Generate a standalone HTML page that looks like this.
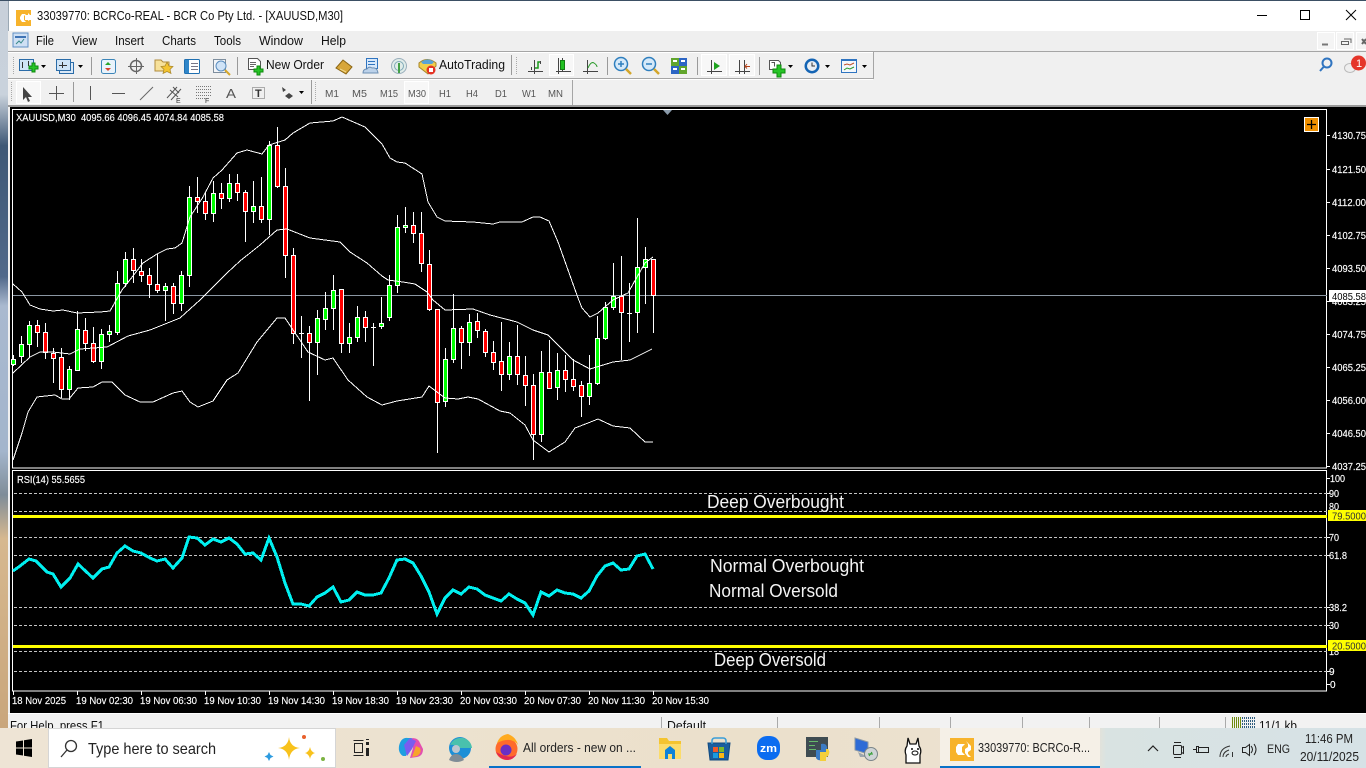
<!DOCTYPE html>
<html><head><meta charset="utf-8"><title>33039770: BCRCo-REAL</title>
<style>html,body{margin:0;padding:0;background:#000;overflow:hidden}svg{display:block}text{font-family:"Liberation Sans",sans-serif;white-space:pre}
.m{font-size:13px;fill:#111}.ax{font-size:10px;fill:#fff;stroke:#fff;stroke-width:.15px}.t{font-size:10.5px;fill:#fff;stroke:#fff;stroke-width:.15px}.tf{font-size:10.5px;fill:#555}.an{font-size:18px;fill:#f4f4f4}.tb{font-size:12px;fill:#222}</style></head>
<body>
<svg xmlns="http://www.w3.org/2000/svg" width="1366" height="768" viewBox="0 0 1366 768">
<defs>
<linearGradient id="wp" x1="0" y1="0" x2="0" y2="1"><stop offset="0" stop-color="#c8d0da"/><stop offset=".13" stop-color="#c9d2dc"/><stop offset=".2" stop-color="#3e5876"/><stop offset=".38" stop-color="#51698a"/><stop offset=".42" stop-color="#a9b9cf"/><stop offset=".62" stop-color="#a3b5cc"/><stop offset=".68" stop-color="#7f8d98"/><stop offset=".74" stop-color="#d6b88f"/><stop offset="1" stop-color="#c9a67c"/></linearGradient>
<linearGradient id="tk" x1="0" y1="0" x2="1" y2="0"><stop offset="0" stop-color="#eee4d5"/><stop offset=".55" stop-color="#ebe0cb"/><stop offset=".8" stop-color="#ece2d3"/><stop offset=".81" stop-color="#d9e3e2"/><stop offset="1" stop-color="#d6e2e6"/></linearGradient>
</defs>
<rect width="1366" height="768" fill="#f0f0f0"/>
<rect x="0" y="0" width="8" height="728" fill="url(#wp)"/>
<rect x="0" y="0" width="1366" height="1" fill="#3b4f64"/>
<rect x="8" y="1" width="1358" height="30" fill="#fff"/>
<rect x="8" y="1" width="1" height="30" fill="#9aa8b4"/>
<!-- title logo -->
<path d="M16 10h15v5h-6v5h6v6H16z" fill="#f7b32b"/><path d="M22 14h4l-2 2v4l2 2h-4l-2-3v-2z" fill="#fff"/><path d="M28 13l3 3v3l-3 2z" fill="#fff"/>
<text x="37" y="20" class="m" style="font-size:12.5px" textLength="306" lengthAdjust="spacingAndGlyphs">33039770: BCRCo-REAL - BCR Co Pty Ltd. - [XAUUSD,M30]</text>
<path d="M1257 15.500h10" stroke="#000"/><rect x="1300.500" y="10.500" width="9" height="9" fill="none" stroke="#000"/><path d="M1346 10l10 10M1356 10l-10 10" stroke="#000"/>
<!-- menu -->
<rect x="8" y="31" width="1358" height="20" fill="#efefef"/>
<rect x="13" y="33" width="15" height="14" fill="#cfe0f4" stroke="#5f8fc4"/><path d="M15 37h11" stroke="#3f74b5" stroke-width="2"/><path d="M16 44l3-3 2 2 3-4" stroke="#3a8a8a" fill="none"/>
<text x="36" y="45" class="m" textLength="18" lengthAdjust="spacingAndGlyphs">File</text><text x="72" y="45" class="m" textLength="25" lengthAdjust="spacingAndGlyphs">View</text><text x="115" y="45" class="m" textLength="29" lengthAdjust="spacingAndGlyphs">Insert</text><text x="162" y="45" class="m" textLength="34" lengthAdjust="spacingAndGlyphs">Charts</text><text x="214" y="45" class="m" textLength="27" lengthAdjust="spacingAndGlyphs">Tools</text><text x="259" y="45" class="m" textLength="44" lengthAdjust="spacingAndGlyphs">Window</text><text x="321" y="45" class="m" textLength="25" lengthAdjust="spacingAndGlyphs">Help</text>
<g fill="#f4f4f4" stroke="#fff"><rect x="1317.500" y="32.500" width="17" height="17"/><rect x="1336.500" y="32.500" width="17" height="17"/><rect x="1356.500" y="32.500" width="12" height="17"/></g>
<path d="M1322 44.500h6" stroke="#777" stroke-width="2"/><path d="M1341.500 41.500h7v3h-7zM1344 39h7v4" fill="none" stroke="#666"/><path d="M1362 39l4 5M1366 39l-4 5" stroke="#666" stroke-width="2"/>
<!-- toolbar lines -->
<rect x="8" y="51" width="1358" height="1" fill="#a5a5a5"/><rect x="8" y="52" width="865" height="1" fill="#fff"/>
<rect x="8" y="78" width="865" height="1" fill="#a5a5a5"/><rect x="8" y="79" width="865" height="1" fill="#fff"/><rect x="873" y="52" width="1" height="27" fill="#a5a5a5"/>
<rect x="572" y="80" width="1" height="26" fill="#a5a5a5"/><rect x="8" y="105" width="1358" height="2" fill="#9a9a9a"/>
<g stroke="#9a9a9a"><path d="M91.500 57v18M237.500 57v18M511.500 55v20M607.500 57v18M697.500 57v18M759.500 57v18M73.500 82v20M311.500 80v24"/></g>
<g stroke="#aaa" stroke-dasharray="1 1"><path d="M13.500 57v18M11.500 82v20M516.500 57v18M315.500 82v20"/></g>
<!-- row 1 icons -->
<g>
<rect x="19.500" y="59.500" width="14" height="11" fill="#cfe4f7" stroke="#2b6ca8"/><path d="M22.500 62v6M28.500 61v5" stroke="#333"/><path d="M29 66h3v-3h3v3h3v3h-3v3h-3v-3h-3z" fill="#27c427" stroke="#0c8a0c"/>
<path d="M41 65h5l-2.500 3z" fill="#000"/>
<rect x="59.500" y="62.500" width="14" height="11" fill="#dbe9f7" stroke="#2b6ca8"/><rect x="56.500" y="59.500" width="14" height="11" fill="#cfe4f7" stroke="#2b6ca8"/><path d="M59 65.500h8M62.500 62v6" stroke="#333"/>
<path d="M78 65h5l-2.500 3z" fill="#000"/>
<rect x="101.500" y="59.500" width="14" height="14" rx="2" fill="#e9f3fb" stroke="#3d86b9"/><path d="M108 62l3 3h-6z" fill="#2aa52a"/><path d="M108 71l3-3h-6z" fill="#d8432a"/>
<circle cx="136" cy="66" r="5.500" fill="none" stroke="#666" stroke-width="1.500"/><path d="M136.500 58v16M128 66.500h16" stroke="#666"/>
<path d="M155 60h6l2 2h6v9h-14z" fill="#f7e19a" stroke="#b08c3c"/><path d="M167 62l2 4 4 .5-3 3 1 4-4-2-4 2 1-4-3-3 4-.5z" fill="#f4c430" stroke="#a7852a" stroke-width=".7"/>
<rect x="184.500" y="59.500" width="15" height="14" rx="1" fill="#fff" stroke="#1f6fb0"/><rect x="185" y="60" width="4" height="13" fill="#2f86c9"/><path d="M191 63.500h7M191 66.500h7M191 69.500h7" stroke="#778"/>
<rect x="213.500" y="59.500" width="12" height="13" fill="#f3f5f8" stroke="#7e8e9e"/><circle cx="221" cy="66" r="5" fill="#cfe3f7" stroke="#5a8dbf"/><path d="M225 70l5 5" stroke="#d6a72c" stroke-width="2"/>
<path d="M248.500 58.500h9l3 3v8h-12z" fill="#fff" stroke="#555"/><path d="M250 62.500h6M250 64.500h6M250 66.500h4" stroke="#666"/><path d="M254 69h3v-3h3v3h3v3h-3v3h-3v-3h-3z" fill="#27c427" stroke="#0c8a0c"/>
<text x="266" y="69" class="m" textLength="58" lengthAdjust="spacingAndGlyphs">New Order</text>
<path d="M336 68l7-8 9 7-6 7z" fill="#d7a63b" stroke="#8a6514"/><path d="M340 69l6 3" stroke="#f0d88a"/>
<rect x="366.500" y="58.500" width="11" height="10" fill="#d7e8fa" stroke="#2f74c0"/><path d="M368 61.500h7M368 64.500h7" stroke="#2f74c0"/><path d="M363 73q0-4 4-4q2-3 5-1q5-1 6 5z" fill="#bcd2ea" stroke="#6d8fb3"/>
<circle cx="399" cy="66" r="7.500" fill="#e0ece9" stroke="#99aebb"/><circle cx="399" cy="66" r="4.500" fill="none" stroke="#7fa9b8"/><path d="M399 63v10" stroke="#43a047" stroke-width="2"/>
<path d="M419 63q8-7 17 0v3l-8 8-9-7z" fill="#f2cf4a" stroke="#a6852a"/><path d="M421 62q7-5 13 0l-2 2h-9z" fill="#5aa3d6"/><circle cx="431" cy="70" r="4.500" fill="#e43325"/><rect x="429" y="68" width="4" height="4" fill="#fff"/>
<text x="439" y="69" class="m" textLength="66" lengthAdjust="spacingAndGlyphs">AutoTrading</text>
<g fill="none" stroke="#444"><path d="M528 71.500h15M534.500 60v14M531.500 70v-3M540.500 64v-3" /></g><path d="M535 68h3v-6h2" fill="none" stroke="#1a9a1a" stroke-width="1.500"/>
<rect x="549.500" y="54.500" width="24" height="21" fill="#f7f7f7" stroke="#fff"/><path d="M556 71.500h15M558.500 58v16M562.500 58v13" stroke="#444" fill="none"/><rect x="560.500" y="60.500" width="4" height="9" fill="#21c121" stroke="#137d13"/>
<path d="M583 71.500h15M587.500 60v14" stroke="#444" fill="none"/><path d="M588 68q3-7 6-5t3 4" stroke="#2a9a2a" fill="none"/>
<circle cx="621" cy="64" r="6.500" fill="#d5e9f9" stroke="#2f7fbe" stroke-width="1.500"/><path d="M618 64h6M621 61v6" stroke="#2f7fbe" stroke-width="1.500"/><path d="M626 69l5 5" stroke="#d3a52a" stroke-width="2.500"/>
<circle cx="649" cy="64" r="6.500" fill="#d5e9f9" stroke="#2f7fbe" stroke-width="1.500"/><path d="M646 64h6" stroke="#2f7fbe" stroke-width="1.500"/><path d="M654 69l5 5" stroke="#d3a52a" stroke-width="2.500"/>
<rect x="671" y="58" width="8" height="8" fill="#61a52c"/><rect x="679" y="58" width="8" height="8" fill="#2c65c4"/><rect x="671" y="66" width="8" height="8" fill="#2c65c4"/><rect x="679" y="66" width="8" height="8" fill="#61a52c"/><path d="M673 61h4M681 61h4M673 69h4M681 69h4" stroke="#fff" stroke-width="2"/>
<rect x="701.500" y="54.500" width="25" height="21" fill="#f7f7f7" stroke="#fff"/><path d="M707 71.500h15M711.500 60v14" stroke="#444" fill="none"/><path d="M714 62l6 4-6 4z" fill="#1fa31f"/>
<rect x="729.500" y="54.500" width="25" height="21" fill="#f7f7f7" stroke="#fff"/><path d="M735 71.500h15M739.500 60v14M744.500 60v14" stroke="#444" fill="none"/><path d="M745 66.500h5M747 64l-2 2.500 2 2" stroke="#b5421a" fill="none"/>
<path d="M769.500 60.500h9l2 2v7h-11z" fill="#fff" stroke="#555"/><path d="M771.500 62.500h3v4" stroke="#555" fill="none"/><path d="M773 69h4v-4h4v4h4v4h-4v4h-4v-4h-4z" fill="#27c427" stroke="#0c8a0c"/><path d="M788 65h5l-2.500 3z" fill="#000"/>
<circle cx="812" cy="66" r="7.500" fill="#1464b4"/><circle cx="812" cy="66" r="5" fill="#e9eef3"/><path d="M812 62.500V66h3" stroke="#333" fill="none"/><path d="M825 65h5l-2.500 3z" fill="#000"/>
<rect x="841.500" y="59.500" width="15" height="13" fill="#f4f8fc" stroke="#2f74c0"/><path d="M842 60h15" stroke="#2f74c0" stroke-width="2"/><path d="M844 65l3-1 3 1 4-2" stroke="#c0502a" fill="none"/><path d="M844 70l3-2 3 1 4-2" stroke="#2a9a2a" fill="none"/><path d="M862 65h5l-2.500 3z" fill="#000"/>
<circle cx="1327" cy="63" r="4.500" fill="none" stroke="#2f74c0" stroke-width="2"/><path d="M1323.500 67l-3.500 4" stroke="#2f74c0" stroke-width="2"/>
<ellipse cx="1350" cy="68" rx="5.500" ry="4.500" fill="#eee" stroke="#bbb"/><circle cx="1358.500" cy="63" r="7.500" fill="#e5352a"/><text x="1356" y="67" style="font-size:11px;fill:#fff">1</text>
</g>
<!-- row 2 -->
<rect x="16.500" y="81.500" width="24" height="22" fill="#f7f7f7" stroke="#fff"/><path d="M23 87v13l3-3 2 5 2-1-2-4h4z" fill="#444"/>
<path d="M56.500 86v14M49 93.500h15" stroke="#555"/><path d="M90.500 86v14" stroke="#555"/><path d="M112 93.500h13" stroke="#555"/><path d="M140 100l13-13" stroke="#666"/>
<path d="M167 98l10-11M171 100l10-11M170 90l8 7M173 87l6 6" stroke="#555" fill="none"/><text x="176" y="103" style="font-size:7px;fill:#333">E</text>
<path d="M196 86.500h15M196 89.500h15M196 92.500h15M196 95.500h15M196 98.500h9" stroke="#777" stroke-dasharray="1 1"/><text x="205" y="103" style="font-size:7px;fill:#333">F</text>
<text x="226" y="98" style="font-size:13px;fill:#555" textLength="10" lengthAdjust="spacingAndGlyphs">A</text>
<rect x="252.500" y="87.500" width="12" height="11" fill="none" stroke="#666" stroke-dasharray="1 1"/><text x="255" y="97" style="font-size:11px;fill:#333;font-weight:bold">T</text>
<path d="M282 87l4 3-3 2zM289 93l4 3-4 3-4-3z" fill="#444"/><path d="M299 91h5l-2.500 3z" fill="#000"/>
<rect x="404.500" y="81.500" width="24" height="22" fill="#f7f7f7" stroke="#fff"/>
<g><text x="325" y="97" class="tf" textLength="14" lengthAdjust="spacingAndGlyphs">M1</text><text x="352" y="97" class="tf" textLength="15" lengthAdjust="spacingAndGlyphs">M5</text><text x="380" y="97" class="tf" textLength="18" lengthAdjust="spacingAndGlyphs">M15</text><text x="408" y="97" class="tf" textLength="18" lengthAdjust="spacingAndGlyphs">M30</text><text x="439" y="97" class="tf" textLength="12" lengthAdjust="spacingAndGlyphs">H1</text><text x="466" y="97" class="tf" textLength="12" lengthAdjust="spacingAndGlyphs">H4</text><text x="495" y="97" class="tf" textLength="12" lengthAdjust="spacingAndGlyphs">D1</text><text x="522" y="97" class="tf" textLength="14" lengthAdjust="spacingAndGlyphs">W1</text><text x="548" y="97" class="tf" textLength="15" lengthAdjust="spacingAndGlyphs">MN</text></g>
<!-- chart area -->
<rect x="10" y="107" width="1356" height="606" fill="#000"/>
<g fill="none" stroke="#fff"><rect x="12.500" y="109.500" width="1314" height="358.500"/><rect x="12.500" y="470.500" width="1314" height="220.500"/></g>
<path d="M663 110h9l-4.500 5z" fill="#8a9aaa"/>
<rect x="1304.500" y="117.500" width="14" height="14" fill="#f09000" stroke="#fff"/><path d="M1311.500 120v9M1307 124.500h9" stroke="#000" stroke-width="1.300"/>
<text x="16" y="121" class="ax" textLength="208" lengthAdjust="spacingAndGlyphs">XAUUSD,M30  4095.66 4096.45 4074.84 4085.58</text>
<path d="M13 295.500H1327" stroke="#8b97a3"/>
<!-- wicks -->
<path shape-rendering="crispEdges" stroke="#fff" fill="none" d="M13.500 355V366M21.500 336V363M29.500 321V357M37.500 320V347M45.500 323V359M53.500 348V383M61.500 348V398M69.500 366V400M77.500 311V371M85.500 318V351M93.500 327V363M101.500 329V369M109.500 325V342M117.500 271V335M125.500 252V287M133.500 248V283M141.500 259V282M149.500 268V298M157.500 254V293M165.500 283V321M173.500 283V314M181.500 271V311M189.500 186V287M197.500 177V213M205.500 192V220M213.500 181V222M221.500 183V209M229.500 174V202M237.500 174V201M245.500 190V242M253.500 181V223M261.500 177V223M269.500 141V235M277.500 127V188M285.500 168V278M293.500 248V344M301.500 316V358M309.500 326V401M317.500 310V375M325.500 292V330M333.500 275V330M341.500 289V353M349.500 323V353M357.500 306V342M365.500 311V342M373.500 323V366M381.500 297V329M389.500 275V321M397.500 215V293M405.500 207V233M413.500 212V243M421.500 212V272M429.500 250V311M437.500 309V453M445.500 348V407M453.500 294V363M461.500 326V369M469.500 314V356M477.500 313V338M485.500 329V357M493.500 341V370M501.500 322V391M509.500 342V380M517.500 325V385M525.500 356V406M533.500 374V460M541.500 351V442M549.500 340V388M557.500 353V400M565.500 355V392M573.500 359V391M581.500 381V417M589.500 355V405M597.500 316V385M605.500 302V340M613.500 263V310M621.500 256V360M629.500 283V342M637.500 218V333M645.500 247V304M653.500 259V333M299 333.500h5M371 327.500h5M627 313.500h5"/>
<!-- green bodies -->
<path shape-rendering="crispEdges" fill="#00ff00" stroke="#fff" d="M11.500 359.500h4v5h-4zM19.500 344.500h4v12h-4zM27.500 325.500h4v19h-4zM67.500 369.500h4v20h-4zM75.500 329.500h4v41h-4zM99.500 334.500h4v27h-4zM107.500 331.500h4v3h-4zM115.500 283.500h4v49h-4zM123.500 259.500h4v24h-4zM163.500 286.500h4v4h-4zM179.500 275.500h4v28h-4zM187.500 197.500h4v78h-4zM211.500 193.500h4v20h-4zM227.500 183.500h4v15h-4zM251.500 206.500h4v5h-4zM267.500 145.500h4v74h-4zM315.500 318.500h4v24h-4zM323.500 308.500h4v11h-4zM331.500 290.500h4v18h-4zM347.500 337.500h4v6h-4zM355.500 317.500h4v20h-4zM379.500 323.500h4v3h-4zM387.500 285.500h4v32h-4zM395.500 227.500h4v58h-4zM403.500 225.500h4v2h-4zM443.500 359.500h4v42h-4zM451.500 328.500h4v31h-4zM467.500 322.500h4v20h-4zM507.500 356.500h4v18h-4zM539.500 372.500h4v62h-4zM555.500 370.500h4v17h-4zM587.500 383.500h4v13h-4zM595.500 338.500h4v45h-4zM603.500 307.500h4v31h-4zM611.500 296.500h4v11h-4zM635.500 267.500h4v45h-4zM643.500 259.500h4v8h-4z"/>
<!-- red bodies -->
<path shape-rendering="crispEdges" fill="#ff0000" stroke="#fff" d="M35.500 325.500h4v7h-4zM43.500 332.500h4v20h-4zM51.500 353.500h4v5h-4zM59.500 357.500h4v32h-4zM83.500 330.500h4v13h-4zM91.500 343.500h4v18h-4zM131.500 259.500h4v11h-4zM139.500 271.500h4v4h-4zM147.500 275.500h4v9h-4zM155.500 284.500h4v6h-4zM171.500 286.500h4v17h-4zM195.500 197.500h4v4h-4zM203.500 201.500h4v12h-4zM219.500 193.500h4v5h-4zM235.500 183.500h4v9h-4zM243.500 192.500h4v19h-4zM259.500 206.500h4v13h-4zM275.500 145.500h4v41h-4zM283.500 186.500h4v69h-4zM291.500 255.500h4v78h-4zM307.500 333.500h4v9h-4zM339.500 289.500h4v54h-4zM363.500 317.500h4v10h-4zM411.500 225.500h4v8h-4zM419.500 233.500h4v30h-4zM427.500 264.500h4v45h-4zM435.500 309.500h4v93h-4zM459.500 328.500h4v14h-4zM475.500 321.500h4v9h-4zM483.500 331.500h4v21h-4zM491.500 352.500h4v10h-4zM499.500 361.500h4v13h-4zM515.500 356.500h4v18h-4zM523.500 375.500h4v10h-4zM531.500 385.500h4v49h-4zM547.500 372.500h4v16h-4zM563.500 370.500h4v9h-4zM571.500 379.500h4v7h-4zM579.500 385.500h4v11h-4zM619.500 296.500h4v16h-4zM651.500 259.500h4v36h-4z"/>
<!-- bands -->
<g fill="none" stroke="#fff" stroke-width="1" shape-rendering="crispEdges">
<polyline points="13,284 22,292 30,305 40,309 53,311 63,310 77,313 100,312 110,311 122,290 143,263 157,254 167,249 175,248 182,243 190,217 203,197 213,178 222,170 237,153 247,150 262,154 269,145 285,140 293,133 310,123 333,121 342,117 365,127 382,144 390,158 397,162 405,163 422,174 428,202 437,217 445,221 473,222 493,224 500,222 522,222 533,217 540,217 549,221 558,242 578,298 582,308 590,317 598,313 613,300 628,293 637,277 645,263 653,257"/>
<polyline points="13,373 30,357 40,352 53,352 70,354 80,349 107,347 128,336 150,330 180,318 200,300 227,273 240,261 260,245 277,230 287,229 310,238 340,242 350,252 367,263 382,276 388,280 403,282 415,284 427,292 433,300 445,310 473,309 490,315 517,322 533,330 548,335 573,360 590,369 613,362 630,360 652,349"/>
<polyline points="13,460 22,433 28,412 37,397 55,395 62,399 69,399 78,388 93,387 102,382 112,382 125,395 140,402 153,402 173,393 182,391 190,402 198,407 213,401 227,380 238,373 257,342 277,318 285,318 308,352 325,360 333,358 348,380 367,397 382,405 397,401 422,397 429,386 445,398 458,399 468,397 478,399 500,411 510,413 525,425 533,440 549,452 565,442 575,428 588,423 598,419 613,426 630,428 645,442 653,442"/>
</g>
<!-- right axis main -->
<g><path d="M1327 135.500h3M1327 169.500h3M1327 202.500h3M1327 235.500h3M1327 268.500h3M1327 301.500h3M1327 334.500h3M1327 367.500h3M1327 400.500h3M1327 433.500h3M1327 466.500h3" stroke="#fff"/>
<text x="1332" y="139" class="ax" textLength="34" lengthAdjust="spacingAndGlyphs">4130.75</text><text x="1332" y="173" class="ax" textLength="34" lengthAdjust="spacingAndGlyphs">4121.50</text><text x="1332" y="206" class="ax" textLength="34" lengthAdjust="spacingAndGlyphs">4112.00</text><text x="1332" y="239" class="ax" textLength="34" lengthAdjust="spacingAndGlyphs">4102.75</text><text x="1332" y="272" class="ax" textLength="34" lengthAdjust="spacingAndGlyphs">4093.50</text><text x="1332" y="305" class="ax" textLength="34" lengthAdjust="spacingAndGlyphs">4083.25</text><text x="1332" y="338" class="ax" textLength="34" lengthAdjust="spacingAndGlyphs">4074.75</text><text x="1332" y="371" class="ax" textLength="34" lengthAdjust="spacingAndGlyphs">4065.25</text><text x="1332" y="404" class="ax" textLength="34" lengthAdjust="spacingAndGlyphs">4056.00</text><text x="1332" y="437" class="ax" textLength="34" lengthAdjust="spacingAndGlyphs">4046.50</text><text x="1332" y="470" class="ax" textLength="34" lengthAdjust="spacingAndGlyphs">4037.25</text>
<rect x="1329" y="290" width="37" height="12" fill="#fff"/><text x="1332" y="300" style="font-size:10px;fill:#000" textLength="34" lengthAdjust="spacingAndGlyphs">4085.58</text></g>
<!-- RSI -->
<text x="17" y="483" class="ax" textLength="68" lengthAdjust="spacingAndGlyphs">RSI(14) 55.5655</text>
<path shape-rendering="crispEdges" d="M14 493.500H1327M14 511.500H1327M14 537.500H1327M14 555.500H1327M14 607.500H1327M14 625.500H1327M14 651.500H1327M14 671.500H1327" stroke="#c4c4c4" stroke-dasharray="3 2"/>
<rect x="13" y="515" width="1314" height="3" fill="#ffff00"/><rect x="13" y="645" width="1314" height="3" fill="#ffff00"/>
<polyline fill="none" stroke="#00f0f0" stroke-width="3" stroke-linejoin="miter" shape-rendering="crispEdges" points="13,571 20,566 29,559 36,561 47,572 53,574 61,587 70,578 78,564 93,578 102,569 109,567 117,553 125,546 133,551 141,553 150,558 157,561 165,559 173,568 182,558 189,537 197,538 205,545 213,539 221,542 229,538 237,544 245,554 253,553 261,560 269,538 277,557 285,583 293,604 301,604 309,606 317,597 325,593 333,587 341,602 349,600 357,592 365,595 373,595 381,593 389,578 397,560 405,559 413,563 421,576 429,592 437,614 445,598 453,590 461,594 469,587 477,589 485,595 493,598 501,601 509,594 517,599 525,603 533,615 541,592 549,596 557,590 565,593 573,594 581,598 589,591 597,576 605,566 613,563 621,570 629,569 637,556 645,554 653,569"/>
<text x="707" y="508" class="an" textLength="137" lengthAdjust="spacingAndGlyphs">Deep Overbought</text>
<text x="710" y="572" class="an" textLength="154" lengthAdjust="spacingAndGlyphs">Normal Overbought</text>
<text x="709" y="597" class="an" textLength="129" lengthAdjust="spacingAndGlyphs">Normal Oversold</text>
<text x="714" y="666" class="an" textLength="112" lengthAdjust="spacingAndGlyphs">Deep Oversold</text>
<!-- rsi axis -->
<path d="M1327 478.500h3M1327 493.500h3M1327 537.500h3M1327 555.500h3M1327 607.500h3M1327 625.500h3M1327 671.500h3M1327 684.500h3" stroke="#fff"/>
<text x="1330" y="482" class="ax" textLength="15" lengthAdjust="spacingAndGlyphs">100</text><text x="1329" y="497" class="ax" textLength="10" lengthAdjust="spacingAndGlyphs">90</text><text x="1329" y="510" class="ax" textLength="10" lengthAdjust="spacingAndGlyphs">80</text><text x="1329" y="541" class="ax" textLength="10" lengthAdjust="spacingAndGlyphs">70</text><text x="1329" y="559" class="ax" textLength="18" lengthAdjust="spacingAndGlyphs">61.8</text><text x="1329" y="611" class="ax" textLength="18" lengthAdjust="spacingAndGlyphs">38.2</text><text x="1329" y="629" class="ax" textLength="10" lengthAdjust="spacingAndGlyphs">30</text><text x="1329" y="655" class="ax" textLength="10" lengthAdjust="spacingAndGlyphs">18</text><text x="1329" y="675" class="ax">9</text><text x="1330" y="688" class="ax">0</text>
<rect x="1328" y="510" width="38" height="11" fill="#ffff00"/><text x="1332" y="519.500" style="font-size:10px;fill:#333" textLength="34" lengthAdjust="spacingAndGlyphs">79.5000</text>
<rect x="1328" y="640" width="38" height="11" fill="#ffff00"/><text x="1332" y="649.500" style="font-size:10px;fill:#333" textLength="34" lengthAdjust="spacingAndGlyphs">20.5000</text>
<!-- time axis -->
<path d="M13.500 691v4M77.500 691v4M141.500 691v4M205.500 691v4M269.500 691v4M333.500 691v4M397.500 691v4M461.500 691v4M525.500 691v4M589.500 691v4M653.500 691v4" stroke="#fff"/>
<g><text x="12" y="704" class="t" textLength="54" lengthAdjust="spacingAndGlyphs">18 Nov 2025</text><text x="76" y="704" class="t" textLength="57" lengthAdjust="spacingAndGlyphs">19 Nov 02:30</text><text x="140" y="704" class="t" textLength="57" lengthAdjust="spacingAndGlyphs">19 Nov 06:30</text><text x="204" y="704" class="t" textLength="57" lengthAdjust="spacingAndGlyphs">19 Nov 10:30</text><text x="268" y="704" class="t" textLength="57" lengthAdjust="spacingAndGlyphs">19 Nov 14:30</text><text x="332" y="704" class="t" textLength="57" lengthAdjust="spacingAndGlyphs">19 Nov 18:30</text><text x="396" y="704" class="t" textLength="57" lengthAdjust="spacingAndGlyphs">19 Nov 23:30</text><text x="460" y="704" class="t" textLength="57" lengthAdjust="spacingAndGlyphs">20 Nov 03:30</text><text x="524" y="704" class="t" textLength="57" lengthAdjust="spacingAndGlyphs">20 Nov 07:30</text><text x="588" y="704" class="t" textLength="57" lengthAdjust="spacingAndGlyphs">20 Nov 11:30</text><text x="652" y="704" class="t" textLength="57" lengthAdjust="spacingAndGlyphs">20 Nov 15:30</text></g>
<!-- status bar -->
<rect x="8" y="713" width="1358" height="15" fill="#f2f2f2"/><rect x="8" y="713" width="1358" height="1" fill="#fff"/>
<text x="10" y="730" class="m" textLength="94" lengthAdjust="spacingAndGlyphs">For Help, press F1</text>
<text x="667" y="730" class="m" textLength="39" lengthAdjust="spacingAndGlyphs">Default</text>
<path d="M661.500 717v11M777.500 717v11M879.500 717v11M950.500 717v11M1022.500 717v11M1089.500 717v11M1159.500 717v11M1225.500 717v11" stroke="#aaa"/>
<path d="M1232.500 728v-11M1234.500 728v-11M1236.500 728v-11M1238.500 728v-11M1240.500 728v-11" stroke="#6e8a10"/><path d="M1242.500 728v-11M1244.500 728v-11M1246.500 728v-11M1248.500 728v-11M1250.500 728v-11M1252.500 728v-11M1254.500 728v-11" stroke="#2f5d7f" stroke-dasharray="2 1"/>
<text x="1259" y="730" class="m" textLength="38" lengthAdjust="spacingAndGlyphs">11/1 kb</text>
<!-- taskbar -->
<rect x="0" y="728" width="1366" height="40" fill="url(#tk)"/>
<g fill="#000"><path d="M16 741.500l7-1v7h-7zM24 740.300l8-1.300v8.500h-8zM16 748.500h7v7l-7-1zM24 748.500h8v8.500l-8-1.300z"/></g>
<rect x="48.500" y="728.500" width="287" height="39" fill="#fff" stroke="#d5d5d5"/>
<circle cx="71" cy="746" r="5.500" fill="none" stroke="#333" stroke-width="1.300"/><path d="M67 750l-6 7" stroke="#333" stroke-width="1.300"/>
<text x="88" y="754" style="font-size:16px;fill:#222" textLength="128" lengthAdjust="spacingAndGlyphs">Type here to search</text>
<path d="M289 737q1 10 11 11q-10 1-11 12q-1-11-11-12q10-1 11-11z" fill="#f8c21c"/><path d="M310 747q1 5 5 6q-4 1-5 6q-1-5-5-6q4-1 5-6z" fill="#f8c21c"/><circle cx="304" cy="737" r="2" fill="#e8602c"/><circle cx="323" cy="759" r="2" fill="#7cb342"/><path d="M269 752l1.500 3 3 1.500-3 1.500-1.500 3-1.500-3-3-1.500 3-1.500z" fill="#2d9be0"/>
<path d="M353.500 740.500h10M353.500 755.500h10M354.500 743.500h8v9h-8z" fill="none" stroke="#222"/><rect x="366" y="742" width="3" height="3" fill="#222"/><rect x="366" y="748" width="3" height="8" fill="#222"/><rect x="366" y="739" width="3" height="1" fill="#222"/>
<path d="M399 746q2-9 9-8l4 0-2 6-4 12h-3q-5-3-4-10z" fill="#1f9fe0"/><path d="M412 738q5 0 7 3l4 8q0 7-6 8l-7 1 3-10z" fill="#e34fb0"/><path d="M404 745l6-7 6 3-4 8-5 7z" fill="#7a5cf0"/><path d="M416 746l4 2q2 5-3 8l-5 1z" fill="#f7a52a"/>
<circle cx="460" cy="748" r="11" fill="#1d8fd6"/><path d="M450 745q4-8 13-7 8 2 9 10h-12q-6-4-10-3z" fill="#49c1ad"/><circle cx="456" cy="749" r="4" fill="#bcc6cf"/><path d="M449 760q2-6 7-6t8 6q-7 4-15 0z" fill="#7f8c96"/>
<circle cx="506.500" cy="749" r="11" fill="#ff6a2c"/><path d="M497 743q3-8 11-9 8 3 10 11-2-3-5-4-6-3-16 2z" fill="#ffaa1f"/><circle cx="506" cy="750" r="5.500" fill="#6a2fc4"/><path d="M496 752q4 8 12 8 5 0 9-6-5 4-11 2-5-1-10-4z" fill="#e22850"/>
<text x="523" y="752" style="font-size:12.500px;fill:#222" textLength="113" lengthAdjust="spacingAndGlyphs">All orders - new on ...</text>
<rect x="489" y="766" width="152" height="2" fill="#0a72c8"/>
<path d="M659 738h8l2 3h12v18h-22z" fill="#f4c430"/><path d="M659 744h22v15h-22z" fill="#fbdc6b"/><path d="M665 750l5-4 5 4v9h-10z" fill="#0e83d8"/><rect x="668" y="754" width="4" height="5" fill="#fbdc6b"/>
<path d="M708 743h22l-2 17h-18z" fill="#1b5e9e" stroke="#114a80" /><path d="M712 744v-3q0-3 3-3h8q3 0 3 3v3" fill="none" stroke="#3a9ed8" stroke-width="1.500"/><rect x="713" y="747" width="5" height="5" fill="#f15b2a"/><rect x="719" y="747" width="5" height="5" fill="#7cb92c"/><rect x="713" y="753" width="5" height="5" fill="#1d9be0"/><rect x="719" y="753" width="5" height="5" fill="#fdb813"/>
<rect x="757" y="736" width="23" height="24" rx="10" fill="#0b6cf0"/><text x="760" y="752" style="font-size:11px;fill:#fff;font-weight:bold" textLength="17" lengthAdjust="spacingAndGlyphs">zm</text>
<rect x="806" y="737" width="22" height="20" fill="#3f4c52"/><path d="M809 741.500h9M809 745.500h6M809 749.500h7" stroke="#66bb6a"/><path d="M816 750h5v-6q5-1 6 3v6h-6v7q-3 1-5-2z" fill="#3b7bc4"/><path d="M820 752h6v-3h2q2 2 1 5t-3 3v4h-6z" fill="#f4cf3a"/>
<path d="M855 738l13 4v12l-13-4z" fill="#2e6bd6" stroke="#8a98a6"/><path d="M858 752l10 5h-8z" fill="#9aa5ae"/><circle cx="871" cy="754" r="6.500" fill="#cfd4d6" stroke="#7a8589"/><path d="M868 754h5M872 752l-3 4" stroke="#2a9a2a"/>
<path d="M908 738l2 6h6l2-6 1 8q3 4 1 9v8h-14v-8q-2-5 1-9z" fill="#fff" stroke="#111" stroke-width="1.300"/><circle cx="912" cy="749" r="1" fill="#111"/><circle cx="918" cy="749" r="1" fill="#111"/><ellipse cx="915" cy="753" rx="3" ry="2" fill="none" stroke="#111"/>
<rect x="940" y="728" width="160" height="40" fill="#f5f0e7"/>
<path d="M950 738h24v23h-24z" fill="#f7b32b"/><path d="M958 744h7l-3 3v5l3 3h-7l-2-3v-5zM966 741l5 5v4l-3 2v2l3 3h-3l-3-4v-4l3-2v-3z" fill="#fff"/>
<text x="978" y="752" style="font-size:12.500px;fill:#222" textLength="112" lengthAdjust="spacingAndGlyphs">33039770: BCRCo-R...</text>
<rect x="940" y="766" width="160" height="2" fill="#0a72c8"/>
<path d="M1148 751l5-5 5 5" fill="none" stroke="#222" stroke-width="1.200"/>
<rect x="1173.500" y="745.500" width="8" height="9" rx="1" fill="none" stroke="#222"/><path d="M1181.500 747.500l2-1v7l-2-1M1174 742.500h7M1174 757.500h7" fill="none" stroke="#222"/>
<path d="M1193 749.500h3M1196.500 746.500h2v6h-2zM1198.500 747.500h10v5h-10" fill="none" stroke="#222"/>
<path d="M1220 757q0-9 10-11M1223 757q0-5 6-7M1226 757q0-2 3-3" fill="none" stroke="#333"/><path d="M1232.500 757v-5" stroke="#333"/>
<path d="M1242.500 747.500h3l4-3v11l-4-3h-3z" fill="none" stroke="#222"/><path d="M1251 746q3 3.500 0 7M1254 744q4 5.500 0 11" fill="none" stroke="#222"/>
<text x="1267" y="753" style="font-size:12px;fill:#222" textLength="23" lengthAdjust="spacingAndGlyphs">ENG</text>
<text x="1305" y="743" style="font-size:12.500px;fill:#222" textLength="48" lengthAdjust="spacingAndGlyphs">11:46 PM</text>
<text x="1300" y="761" style="font-size:12.500px;fill:#222" textLength="59" lengthAdjust="spacingAndGlyphs">20/11/2025</text>
</svg>
</body></html>
